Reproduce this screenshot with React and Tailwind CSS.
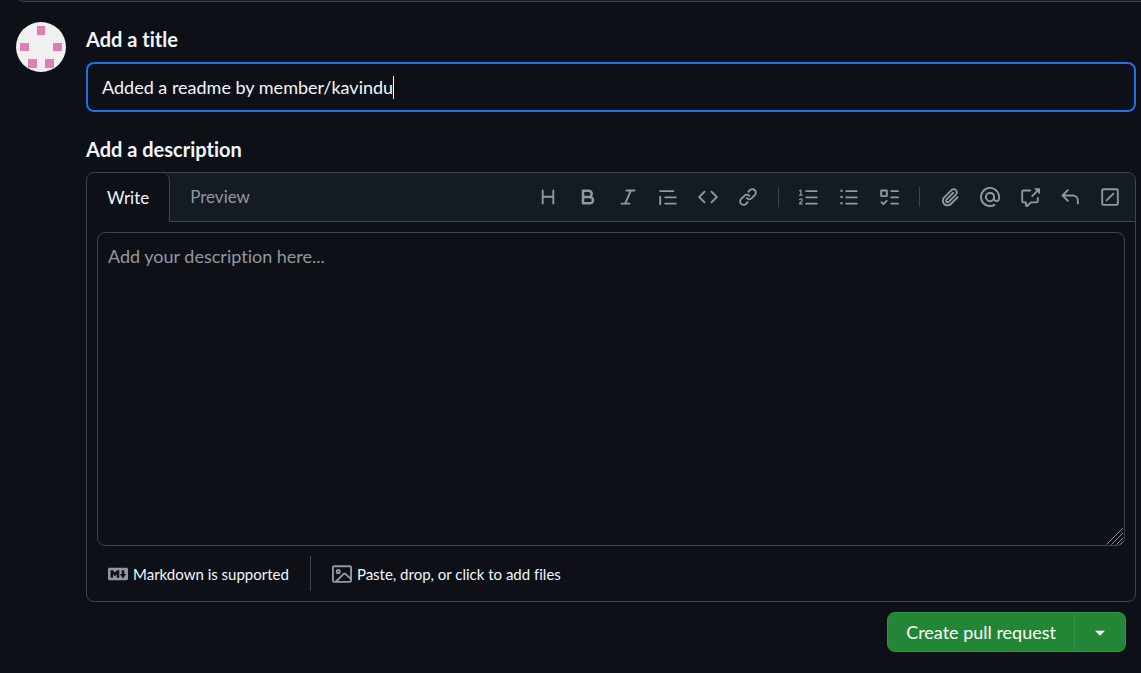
import React, { useState } from "react";

const icons = {
  heading:
    "M3.75 2a.75.75 0 0 1 .75.75V7h7V2.75a.75.75 0 0 1 1.5 0v10.5a.75.75 0 0 1-1.5 0V8.5h-7v4.75a.75.75 0 0 1-1.5 0V2.75A.75.75 0 0 1 3.75 2Z",
  bold: "M4 2h4.5a3.501 3.501 0 0 1 2.852 5.53A3.499 3.499 0 0 1 9.5 14H4a1 1 0 0 1-1-1V3a1 1 0 0 1 1-1Zm1 7v3h4.5a1.5 1.5 0 0 0 0-3Zm3.5-2a1.5 1.5 0 0 0 0-3H5v3Z",
  italic:
    "M6 2.75A.75.75 0 0 1 6.75 2h6.5a.75.75 0 0 1 0 1.5h-2.505l-3.858 9H9.25a.75.75 0 0 1 0 1.5h-6.5a.75.75 0 0 1 0-1.5h2.505l3.858-9H6.75A.75.75 0 0 1 6 2.75Z",
  quote:
    "M1.75 2.5h10.5a.75.75 0 0 1 0 1.5H1.75a.75.75 0 0 1 0-1.5Zm4 5h8.5a.75.75 0 0 1 0 1.5h-8.5a.75.75 0 0 1 0-1.5Zm0 5h8.5a.75.75 0 0 1 0 1.5h-8.5a.75.75 0 0 1 0-1.5ZM2.5 7.75v6a.75.75 0 0 1-1.5 0v-6a.75.75 0 0 1 1.5 0Z",
  code: "m11.28 3.22 4.25 4.25a.75.75 0 0 1 0 1.06l-4.25 4.25a.749.749 0 0 1-1.275-.326.749.749 0 0 1 .215-.734L13.94 8l-3.72-3.72a.749.749 0 0 1 .326-1.275.749.749 0 0 1 .734.215Zm-6.56 0a.751.751 0 0 1 1.042.018.751.751 0 0 1 .018 1.042L2.06 8l3.72 3.72a.749.749 0 0 1-.326 1.275.749.749 0 0 1-.734-.215L.47 8.53a.75.75 0 0 1 0-1.06Z",
  link: "m7.775 3.275 1.25-1.25a3.5 3.5 0 1 1 4.95 4.95l-2.5 2.5a3.5 3.5 0 0 1-4.95 0 .751.751 0 0 1 .018-1.042.751.751 0 0 1 1.042-.018 1.998 1.998 0 0 0 2.83 0l2.5-2.5a2.002 2.002 0 0 0-2.83-2.83l-1.25 1.25a.751.751 0 0 1-1.042-.018.751.751 0 0 1-.018-1.042Zm-4.69 9.64a1.998 1.998 0 0 0 2.83 0l1.25-1.25a.751.751 0 0 1 1.042.018.751.751 0 0 1 .018 1.042l-1.25 1.25a3.5 3.5 0 1 1-4.95-4.95l2.5-2.5a3.5 3.5 0 0 1 4.95 0 .751.751 0 0 1-.018 1.042.751.751 0 0 1-1.042.018 1.998 1.998 0 0 0-2.83 0l-2.5 2.5a1.998 1.998 0 0 0 0 2.83Z",
  listOrdered:
    "M5 3.25a.75.75 0 0 1 .75-.75h8.5a.75.75 0 0 1 0 1.5h-8.5A.75.75 0 0 1 5 3.25Zm0 5a.75.75 0 0 1 .75-.75h8.5a.75.75 0 0 1 0 1.5h-8.5A.75.75 0 0 1 5 8.25Zm0 5a.75.75 0 0 1 .75-.75h8.5a.75.75 0 0 1 0 1.5h-8.5a.75.75 0 0 1-.75-.75ZM.924 10.32a.5.5 0 0 1-.851-.525l.001-.001.001-.002.002-.004.007-.011c.097-.144.215-.273.348-.384.228-.19.588-.392 1.068-.392.468 0 .858.181 1.126.484.259.294.377.673.377 1.038 0 .987-.686 1.495-1.156 1.845l-.047.035c-.303.225-.522.4-.654.597h1.357a.5.5 0 0 1 0 1H.5a.5.5 0 0 1-.5-.5c0-1.005.692-1.52 1.167-1.875l.035-.025c.531-.396.8-.625.8-1.078a.57.57 0 0 0-.128-.376C1.806 10.068 1.695 10 1.5 10a.658.658 0 0 0-.429.163.835.835 0 0 0-.144.153ZM2.003 2.5V6h.503a.5.5 0 0 1 0 1H.5a.5.5 0 0 1 0-1h.503V3.308l-.28.14a.5.5 0 0 1-.446-.895l1.003-.5a.5.5 0 0 1 .723.447Z",
  listUnordered:
    "M5.75 2.5h8.5a.75.75 0 0 1 0 1.5h-8.5a.75.75 0 0 1 0-1.5Zm0 5h8.5a.75.75 0 0 1 0 1.5h-8.5a.75.75 0 0 1 0-1.5Zm0 5h8.5a.75.75 0 0 1 0 1.5h-8.5a.75.75 0 0 1 0-1.5ZM2 14a1 1 0 1 1 0-2 1 1 0 0 1 0 2Zm1-6a1 1 0 1 1-2 0 1 1 0 0 1 2 0ZM2 4a1 1 0 1 1 0-2 1 1 0 0 1 0 2Z",
  tasklist:
    "M2 2h4a1 1 0 0 1 1 1v4a1 1 0 0 1-1 1H2a1 1 0 0 1-1-1V3a1 1 0 0 1 1-1Zm4.655 8.595a.75.75 0 0 1 0 1.06L4.03 14.28a.75.75 0 0 1-1.06 0l-1.5-1.5a.749.749 0 0 1 .326-1.275.749.749 0 0 1 .734.215l.97.97 2.095-2.095a.75.75 0 0 1 1.06 0ZM9.75 2.5h5.5a.75.75 0 0 1 0 1.5h-5.5a.75.75 0 0 1 0-1.5Zm0 5h5.5a.75.75 0 0 1 0 1.5h-5.5a.75.75 0 0 1 0-1.5Zm0 5h5.5a.75.75 0 0 1 0 1.5h-5.5a.75.75 0 0 1 0-1.5Zm-7.25-9v3h3v-3Z",
  paperclip:
    "M12.212 3.02a1.753 1.753 0 0 0-2.478.003l-5.83 5.83a3.007 3.007 0 0 0-.88 2.127c0 .795.315 1.551.88 2.116.567.567 1.333.89 2.126.89.79 0 1.548-.321 2.116-.89l5.48-5.48a.75.75 0 0 1 1.061 1.06l-5.48 5.48a4.492 4.492 0 0 1-3.177 1.33c-1.2 0-2.345-.487-3.187-1.33a4.483 4.483 0 0 1-1.32-3.177c0-1.195.475-2.341 1.32-3.186l5.83-5.83a3.25 3.25 0 0 1 5.553 2.297c0 .863-.343 1.691-.953 2.301L7.439 12.39c-.375.377-.884.59-1.416.593a1.998 1.998 0 0 1-1.412-.593 1.992 1.992 0 0 1 0-2.828l5.48-5.48a.751.751 0 0 1 1.042.018.751.751 0 0 1 .018 1.042l-5.48 5.48a.492.492 0 0 0 0 .707.499.499 0 0 0 .352.154.51.51 0 0 0 .356-.154l5.833-5.827a1.755 1.755 0 0 0 0-2.481Z",
  mention:
    "M4.75 2.37a6.501 6.501 0 0 0 6.5 11.26.75.75 0 0 1 .75 1.298A7.999 7.999 0 0 1 .989 4.148 8 8 0 0 1 16 7.75v1.5a2.75 2.75 0 0 1-5.072 1.475 3.999 3.999 0 0 1-6.65-4.19A4 4 0 0 1 12 8v1.25a1.25 1.25 0 0 0 2.5 0V7.867a6.5 6.5 0 0 0-9.75-5.496ZM10.5 8a2.5 2.5 0 1 0-5 0 2.5 2.5 0 0 0 5 0Z",
  crossReference:
    "M2.75 3.5a.25.25 0 0 0-.25.25v7.5c0 .138.112.25.25.25h2a.75.75 0 0 1 .75.75v2.19l2.72-2.72a.749.749 0 0 1 .53-.22h4.5a.25.25 0 0 0 .25-.25v-2.5a.75.75 0 0 1 1.5 0v2.5A1.75 1.75 0 0 1 13.25 13H9.06l-2.573 2.573A1.458 1.458 0 0 1 4 14.543V13H2.75A1.75 1.75 0 0 1 1 11.25v-7.5C1 2.784 1.784 2 2.75 2h5.5a.75.75 0 0 1 0 1.5ZM16 1.25v4.146a.25.25 0 0 1-.427.177L14.03 4.03l-3.75 3.75a.749.749 0 0 1-1.275-.326.749.749 0 0 1 .215-.734l3.75-3.75-1.543-1.543A.25.25 0 0 1 11.604 1h4.146a.25.25 0 0 1 .25.25Z",
  reply:
    "M6.78 1.97a.75.75 0 0 1 0 1.06L3.81 6h6.44A4.75 4.75 0 0 1 15 10.75v2.5a.75.75 0 0 1-1.5 0v-2.5a3.25 3.25 0 0 0-3.25-3.25H3.81l2.97 2.97a.749.749 0 0 1-.326 1.275.749.749 0 0 1-.734-.215L1.47 7.28a.75.75 0 0 1 0-1.06l4.25-4.25a.75.75 0 0 1 1.06 0Z",
  diffIgnored:
    "M13.25 1c.966 0 1.75.784 1.75 1.75v10.5A1.75 1.75 0 0 1 13.25 15H2.75A1.75 1.75 0 0 1 1 13.25V2.75C1 1.784 1.784 1 2.75 1ZM2.75 2.5a.25.25 0 0 0-.25.25v10.5c0 .138.112.25.25.25h10.5a.25.25 0 0 0 .25-.25V2.75a.25.25 0 0 0-.25-.25Zm8.53 3.28-5.5 5.5a.75.75 0 0 1-1.06-1.06l5.5-5.5a.75.75 0 0 1 1.06 1.06Z",
  markdown:
    "M14.85 3c.63 0 1.15.52 1.14 1.15v7.7c0 .63-.51 1.15-1.15 1.15H1.15C.52 13 0 12.48 0 11.84V4.15C0 3.52.52 3 1.15 3ZM9 11V5H7L5.5 7 4 5H2v6h2V8l1.5 1.92L7 8v3Zm2.99.5L14.5 8H13V5h-2v3H9.5Z",
  image:
    "M16 13.25A1.75 1.75 0 0 1 14.25 15H1.75A1.75 1.75 0 0 1 0 13.25V2.75C0 1.784.784 1 1.75 1h12.5c.966 0 1.75.784 1.75 1.75ZM1.75 2.5a.25.25 0 0 0-.25.25v10.5c0 .138.112.25.25.25h.94l.03-.03 6.077-6.078a1.75 1.75 0 0 1 2.412-.06L14.5 10.31V2.75a.25.25 0 0 0-.25-.25Zm12.5 11a.25.25 0 0 0 .25-.25v-.917l-4.298-3.889a.25.25 0 0 0-.344.009L4.81 13.5ZM7 6a2 2 0 1 1-3.999.001A2 2 0 0 1 7 6ZM5.5 6a.5.5 0 1 0-1 0 .5.5 0 0 0 1 0Z",
  triangleDown:
    "m4.427 7.427 3.396 3.396a.25.25 0 0 0 .354 0l3.396-3.396A.25.25 0 0 0 11.396 7H4.604a.25.25 0 0 0-.177.427Z",
};

const toolGroups = [
  [
    ["heading", "Heading"],
    ["bold", "Bold"],
    ["italic", "Italic"],
    ["quote", "Quote"],
    ["code", "Code"],
    ["link", "Link"],
  ],
  [
    ["listOrdered", "Numbered list"],
    ["listUnordered", "Unordered list"],
    ["tasklist", "Task list"],
  ],
  [
    ["paperclip", "Attach files"],
    ["mention", "Mention"],
    ["crossReference", "Reference"],
    ["reply", "Saved replies"],
    ["diffIgnored", "Slash commands"],
  ],
];

const Icon = ({ name }) => (
  <svg
    viewBox="0 0 16 16"
    fill="currentColor"
    className="w-5 h-5 shrink-0"
    aria-hidden="true"
  >
    <path d={icons[name]} />
  </svg>
);

const Avatar = () => (
  <svg
    viewBox="0 0 50 50"
    className="w-[50px] h-[50px] mt-5 shrink-0 rounded-full bg-[#f0f0f0]"
    aria-hidden="true"
  >
    <g fill="#e17db5">
      <rect x="21" y="4" width="8" height="9" />
      <rect x="4" y="21" width="9" height="8" />
      <rect x="37" y="21" width="9" height="8" />
      <rect x="12" y="37" width="9" height="9" />
      <rect x="29" y="37" width="9" height="9" />
    </g>
  </svg>
);

const Toolbar = () => (
  <div className="flex items-center ml-auto pr-[5px] text-[#9198a1]">
    {toolGroups.map((group, index) => (
      <React.Fragment key={index}>
        {index > 0 && <span className="w-px h-5 mx-[10px] bg-[#3d444d]"></span>}
        {group.map(([name, label]) => (
          <button
            key={name}
            type="button"
            aria-label={label}
            className="w-10 h-10 flex items-center justify-center cursor-pointer"
          >
            <Icon name={name} />
          </button>
        ))}
      </React.Fragment>
    ))}
  </div>
);

const App = () => {
  const [title, setTitle] = useState("Added a readme by member/kavindu");
  const [description, setDescription] = useState("");

  return (
    <div className="min-h-screen bg-[#0d1117] text-[#f0f6fc] font-['Lato','Open_Sans',sans-serif] [font-variant-ligatures:none] text-lg leading-6 overflow-hidden">
      {/* Bottom edge of the compare bar */}
      <div className="h-[2px] pl-4 flex items-end overflow-hidden">
        <div className="h-6 flex-1 shrink-0 border border-r-0 border-[#3d444d] rounded-l-lg bg-[#151b23]"></div>
      </div>

      <form
        className="flex gap-5 pl-4 pr-[5px]"
        onSubmit={(e) => e.preventDefault()}
      >
        <Avatar />

        <div className="flex-1 min-w-0 pt-[25px]">
          {/* Title */}
          <label
            htmlFor="title"
            className="block text-xl leading-6 font-bold"
          >
            Add a title
          </label>
          <div className="relative mt-[11px]">
            <input
              id="title"
              type="text"
              value={title}
              onChange={(e) => setTitle(e.target.value)}
              className="block w-full h-[50px] px-[14px] rounded-lg border-2 border-[#1f6feb] bg-[#0d1117] outline-none"
            />
            <span className="absolute left-[307px] top-[14px] w-px h-[23px] bg-white"></span>
          </div>

          {/* Description */}
          <label
            htmlFor="description"
            className="block mt-[25px] text-xl leading-6 font-bold"
          >
            Add a description
          </label>
          <div className="mt-[11px] border border-[#3d444d] rounded-lg">
            <div className="flex h-[49px] rounded-t-lg bg-[#151b23] text-[17px]">
              <button
                type="button"
                className="px-5 rounded-t-lg border-r border-[#3d444d] bg-[#0d1117] cursor-pointer"
              >
                Write
              </button>
              <div className="flex flex-1 border-b border-[#3d444d]">
                <button
                  type="button"
                  className="px-5 text-[#9198a1] cursor-pointer"
                >
                  Preview
                </button>
                <Toolbar />
              </div>
            </div>

            <div className="relative m-[10px]">
              <textarea
                id="description"
                value={description}
                onChange={(e) => setDescription(e.target.value)}
                placeholder="Add your description here..."
                className="block w-full h-[314px] px-[10px] py-[11px] rounded-lg border border-[#3d444d] bg-[#0d1117] placeholder:text-[#9198a1] outline-none resize-none"
              />
              <svg
                viewBox="0 0 18 18"
                className="absolute right-px bottom-px w-[18px] h-[18px] pointer-events-none"
                fill="none"
                stroke="#8b8f94"
                aria-hidden="true"
              >
                <path d="M0.5 17.5L17 1M5.5 17.5L17 6M10.5 17.5L17 11M14 17.5L17 14.5" />
              </svg>
            </div>

            {/* Footer */}
            <div className="flex items-center h-[35px] mb-[10px] pl-[21px] text-[15px]">
              <a href="#markdown" className="flex items-center gap-[5px]">
                <span className="text-[#9198a1]">
                  <Icon name="markdown" />
                </span>
                Markdown is supported
              </a>
              <span className="w-px h-[35px] mx-[21px] bg-[#3d444d]"></span>
              <button
                type="button"
                className="flex items-center gap-[5px] cursor-pointer"
              >
                <span className="text-[#9198a1]">
                  <Icon name="image" />
                </span>
                Paste, drop, or click to add files
              </button>
            </div>
          </div>

          {/* Submit */}
          <div className="flex justify-end mt-[10px] pr-[10px]">
            <button
              type="submit"
              className="h-10 px-[18px] rounded-l-lg border border-[#36924a] bg-[#238636] text-white cursor-pointer"
            >
              Create pull request
            </button>
            <button
              type="button"
              aria-label="Select a type of pull request"
              className="w-[51px] h-10 flex items-center justify-center rounded-r-lg border border-l-0 border-[#36924a] bg-[#238636] text-white cursor-pointer"
            >
              <Icon name="triangleDown" />
            </button>
          </div>
        </div>
      </form>
    </div>
  );
};

export default App;
